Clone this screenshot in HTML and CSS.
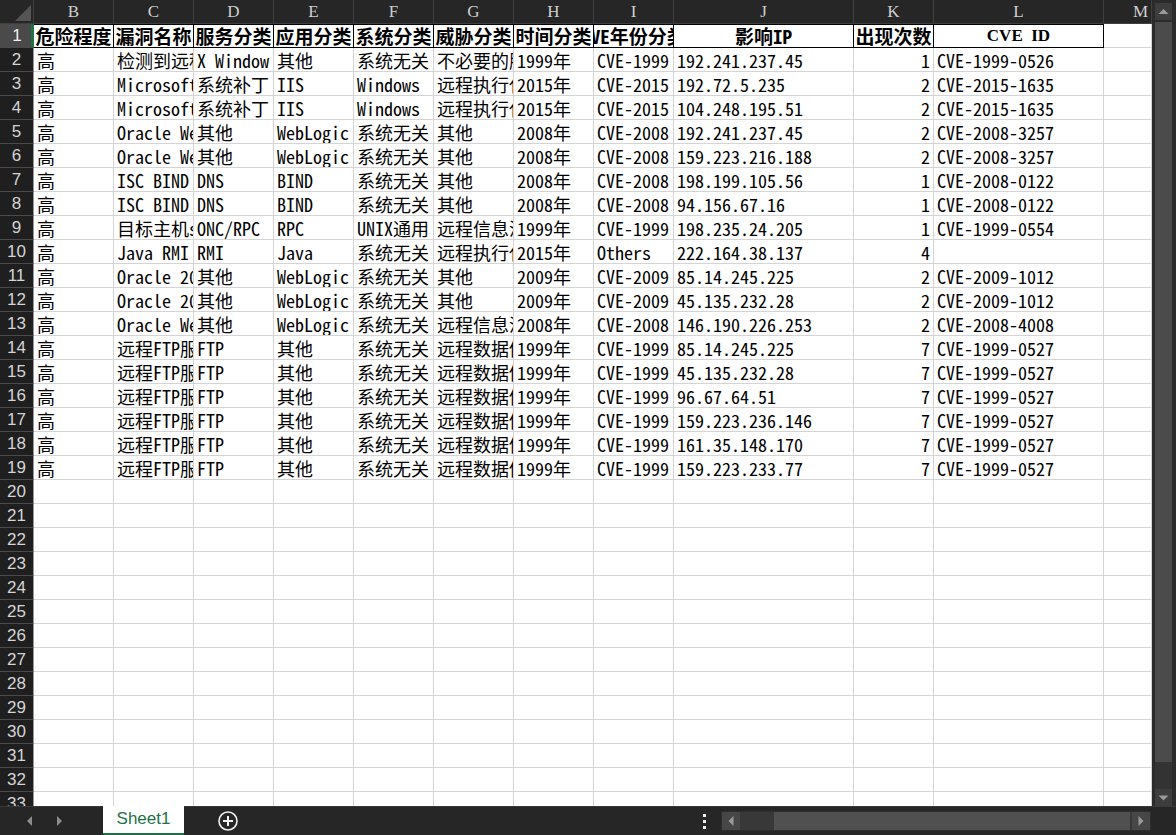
FILE: index.html
```html
<!DOCTYPE html>
<html lang="zh">
<head>
<meta charset="utf-8">
<title>Sheet1</title>
<link rel="stylesheet" href="styles.css">
</head>
<body>
<div class="app">
  <div class="main">
    <div class="sheet">
      <div class="row colhdr"><span class="corner"></span><span>B</span><span>C</span><span>D</span><span>E</span><span>F</span><span>G</span><span>H</span><span>I</span><span>J</span><span>K</span><span>L</span><span class="m">M</span></div>
      <div class="row hdr"><span class="rh sel">1</span><span>危险程度</span><span>漏洞名称</span><span>服务分类</span><span>应用分类</span><span>系统分类</span><span>威胁分类</span><span>时间分类</span><span>CVE年份分类</span><span>影响IP</span><span>出现次数</span><span class="cveid">CVE  ID</span><span class="plain"></span></div>
      <div class="row"><span class="rh">2</span><span>高</span><span>检测到远程</span><span>X Window</span><span>其他</span><span>系统无关</span><span>不必要的服</span><span>1999年</span><span>CVE-1999</span><span>192.241.237.45</span><span class="n">1</span><span>CVE-1999-0526</span><span></span></div>
      <div class="row"><span class="rh">3</span><span>高</span><span>Microsoft</span><span>系统补丁</span><span>IIS</span><span>Windows</span><span>远程执行代</span><span>2015年</span><span>CVE-2015</span><span>192.72.5.235</span><span class="n">2</span><span>CVE-2015-1635</span><span></span></div>
      <div class="row"><span class="rh">4</span><span>高</span><span>Microsoft</span><span>系统补丁</span><span>IIS</span><span>Windows</span><span>远程执行代</span><span>2015年</span><span>CVE-2015</span><span>104.248.195.51</span><span class="n">2</span><span>CVE-2015-1635</span><span></span></div>
      <div class="row"><span class="rh">5</span><span>高</span><span>Oracle Web</span><span>其他</span><span>WebLogic</span><span>系统无关</span><span>其他</span><span>2008年</span><span>CVE-2008</span><span>192.241.237.45</span><span class="n">2</span><span>CVE-2008-3257</span><span></span></div>
      <div class="row"><span class="rh">6</span><span>高</span><span>Oracle Web</span><span>其他</span><span>WebLogic</span><span>系统无关</span><span>其他</span><span>2008年</span><span>CVE-2008</span><span>159.223.216.188</span><span class="n">2</span><span>CVE-2008-3257</span><span></span></div>
      <div class="row"><span class="rh">7</span><span>高</span><span>ISC BIND</span><span>DNS</span><span>BIND</span><span>系统无关</span><span>其他</span><span>2008年</span><span>CVE-2008</span><span>198.199.105.56</span><span class="n">1</span><span>CVE-2008-0122</span><span></span></div>
      <div class="row"><span class="rh">8</span><span>高</span><span>ISC BIND</span><span>DNS</span><span>BIND</span><span>系统无关</span><span>其他</span><span>2008年</span><span>CVE-2008</span><span>94.156.67.16</span><span class="n">1</span><span>CVE-2008-0122</span><span></span></div>
      <div class="row"><span class="rh">9</span><span>高</span><span>目标主机s</span><span>ONC/RPC</span><span>RPC</span><span>UNIX通用</span><span>远程信息泄</span><span>1999年</span><span>CVE-1999</span><span>198.235.24.205</span><span class="n">1</span><span>CVE-1999-0554</span><span></span></div>
      <div class="row"><span class="rh">10</span><span>高</span><span>Java RMI</span><span>RMI</span><span>Java</span><span>系统无关</span><span>远程执行代</span><span>2015年</span><span>Others</span><span>222.164.38.137</span><span class="n">4</span><span></span><span></span></div>
      <div class="row"><span class="rh">11</span><span>高</span><span>Oracle 20</span><span>其他</span><span>WebLogic</span><span>系统无关</span><span>其他</span><span>2009年</span><span>CVE-2009</span><span>85.14.245.225</span><span class="n">2</span><span>CVE-2009-1012</span><span></span></div>
      <div class="row"><span class="rh">12</span><span>高</span><span>Oracle 20</span><span>其他</span><span>WebLogic</span><span>系统无关</span><span>其他</span><span>2009年</span><span>CVE-2009</span><span>45.135.232.28</span><span class="n">2</span><span>CVE-2009-1012</span><span></span></div>
      <div class="row"><span class="rh">13</span><span>高</span><span>Oracle Web</span><span>其他</span><span>WebLogic</span><span>系统无关</span><span>远程信息泄</span><span>2008年</span><span>CVE-2008</span><span>146.190.226.253</span><span class="n">2</span><span>CVE-2008-4008</span><span></span></div>
      <div class="row"><span class="rh">14</span><span>高</span><span>远程FTP服</span><span>FTP</span><span>其他</span><span>系统无关</span><span>远程数据修</span><span>1999年</span><span>CVE-1999</span><span>85.14.245.225</span><span class="n">7</span><span>CVE-1999-0527</span><span></span></div>
      <div class="row"><span class="rh">15</span><span>高</span><span>远程FTP服</span><span>FTP</span><span>其他</span><span>系统无关</span><span>远程数据修</span><span>1999年</span><span>CVE-1999</span><span>45.135.232.28</span><span class="n">7</span><span>CVE-1999-0527</span><span></span></div>
      <div class="row"><span class="rh">16</span><span>高</span><span>远程FTP服</span><span>FTP</span><span>其他</span><span>系统无关</span><span>远程数据修</span><span>1999年</span><span>CVE-1999</span><span>96.67.64.51</span><span class="n">7</span><span>CVE-1999-0527</span><span></span></div>
      <div class="row"><span class="rh">17</span><span>高</span><span>远程FTP服</span><span>FTP</span><span>其他</span><span>系统无关</span><span>远程数据修</span><span>1999年</span><span>CVE-1999</span><span>159.223.236.146</span><span class="n">7</span><span>CVE-1999-0527</span><span></span></div>
      <div class="row"><span class="rh">18</span><span>高</span><span>远程FTP服</span><span>FTP</span><span>其他</span><span>系统无关</span><span>远程数据修</span><span>1999年</span><span>CVE-1999</span><span>161.35.148.170</span><span class="n">7</span><span>CVE-1999-0527</span><span></span></div>
      <div class="row"><span class="rh">19</span><span>高</span><span>远程FTP服</span><span>FTP</span><span>其他</span><span>系统无关</span><span>远程数据修</span><span>1999年</span><span>CVE-1999</span><span>159.223.233.77</span><span class="n">7</span><span>CVE-1999-0527</span><span></span></div>
      <div class="row"><span class="rh">20</span><span></span><span></span><span></span><span></span><span></span><span></span><span></span><span></span><span></span><span></span><span></span><span></span></div>
      <div class="row"><span class="rh">21</span><span></span><span></span><span></span><span></span><span></span><span></span><span></span><span></span><span></span><span></span><span></span><span></span></div>
      <div class="row"><span class="rh">22</span><span></span><span></span><span></span><span></span><span></span><span></span><span></span><span></span><span></span><span></span><span></span><span></span></div>
      <div class="row"><span class="rh">23</span><span></span><span></span><span></span><span></span><span></span><span></span><span></span><span></span><span></span><span></span><span></span><span></span></div>
      <div class="row"><span class="rh">24</span><span></span><span></span><span></span><span></span><span></span><span></span><span></span><span></span><span></span><span></span><span></span><span></span></div>
      <div class="row"><span class="rh">25</span><span></span><span></span><span></span><span></span><span></span><span></span><span></span><span></span><span></span><span></span><span></span><span></span></div>
      <div class="row"><span class="rh">26</span><span></span><span></span><span></span><span></span><span></span><span></span><span></span><span></span><span></span><span></span><span></span><span></span></div>
      <div class="row"><span class="rh">27</span><span></span><span></span><span></span><span></span><span></span><span></span><span></span><span></span><span></span><span></span><span></span><span></span></div>
      <div class="row"><span class="rh">28</span><span></span><span></span><span></span><span></span><span></span><span></span><span></span><span></span><span></span><span></span><span></span><span></span></div>
      <div class="row"><span class="rh">29</span><span></span><span></span><span></span><span></span><span></span><span></span><span></span><span></span><span></span><span></span><span></span><span></span></div>
      <div class="row"><span class="rh">30</span><span></span><span></span><span></span><span></span><span></span><span></span><span></span><span></span><span></span><span></span><span></span><span></span></div>
      <div class="row"><span class="rh">31</span><span></span><span></span><span></span><span></span><span></span><span></span><span></span><span></span><span></span><span></span><span></span><span></span></div>
      <div class="row"><span class="rh">32</span><span></span><span></span><span></span><span></span><span></span><span></span><span></span><span></span><span></span><span></span><span></span><span></span></div>
      <div class="row"><span class="rh">33</span><span></span><span></span><span></span><span></span><span></span><span></span><span></span><span></span><span></span><span></span><span></span><span></span></div>
    </div>
    <div class="vscroll">
      <div class="vbtn"><svg width="17" height="17" viewBox="0 0 17 17"><path d="M3.5 11 L8.5 6 L13.5 11 Z" fill="#9a9a9a"/></svg></div>
      <div class="vthumb"></div>
      <div class="vtrack"></div>
      <div class="vbtn"><svg width="17" height="17" viewBox="0 0 17 17"><path d="M3.5 6.5 L8.5 11.5 L13.5 6.5 Z" fill="#9a9a9a"/></svg></div>
    </div>
  </div>
  <div class="bottom">
    <div class="nav">
      <svg class="navl" width="8" height="12" viewBox="0 0 8 12"><path d="M6 1 L1 6 L6 11 Z" fill="#8c8c8c"/></svg>
      <svg class="navr" width="8" height="12" viewBox="0 0 8 12"><path d="M2 1 L7 6 L2 11 Z" fill="#8c8c8c"/></svg>
    </div>
    <div class="tab">Sheet1</div>
    <svg class="add" width="20" height="20" viewBox="0 0 20 20"><circle cx="10" cy="10" r="9" fill="none" stroke="#f2f2f2" stroke-width="1.6"/><path d="M10 5 V15 M5 10 H15" stroke="#f2f2f2" stroke-width="2"/></svg>
    <div class="dots"><i></i><i></i><i></i></div>
    <div class="hscroll">
      <div class="hbtn"><svg width="18" height="18" viewBox="0 0 18 18"><path d="M11.5 4 L6.5 9 L11.5 14 Z" fill="#9a9a9a"/></svg></div>
      <div class="htrack"></div>
      <div class="hthumb"></div>
      <div class="hbtn"><svg width="18" height="18" viewBox="0 0 18 18"><path d="M6.5 4 L11.5 9 L6.5 14 Z" fill="#9a9a9a"/></svg></div>
    </div>
  </div>
</div>
</body>
</html>
```
FILE: styles.css
```css
* { box-sizing: border-box; }
html, body { margin: 0; padding: 0; }
body { background: #262626; width: 1176px; height: 835px; overflow: hidden; }

.app { width: 1176px; height: 835px; display: flex; flex-direction: column; }
.main { height: 806px; display: flex; }
.sheet { width: 1152px; height: 806px; overflow: hidden; background: #fff; }

.row {
  display: grid;
  grid-template-columns: 34px repeat(8, 80px) 180px 80px 170px 48px;
  height: 24px;
}
.row > span {
  display: flex;
  align-items: center;
  justify-content: flex-start;
  overflow: hidden;
  white-space: nowrap;
  padding: 1px 3px 0;
  border-right: 1px solid #d4d4d4;
  border-bottom: 1px solid #d4d4d4;
  font: 18px/22px "Noto Sans Mono CJK SC", "Liberation Mono", "Noto Sans CJK SC", monospace;
  color: #000;
  background: #fff;
}
.row > span.n { justify-content: flex-end; }

/* column header */
.colhdr > span {
  background: #262626;
  color: #cfcfcf;
  justify-content: center;
  border-right: 1px solid #3f3f3f;
  border-bottom: 1px solid #3f3f3f;
  font: 17px/22px "Liberation Serif", serif;
  padding: 0 3px;
}
.colhdr > span.m { justify-content: flex-end; }
.colhdr > span.corner { position: relative; background: #262626; }
.colhdr > span.corner::after {
  content: "";
  position: absolute;
  right: 2px;
  bottom: 2px;
  width: 0;
  height: 0;
  border-left: 16px solid transparent;
  border-bottom: 16px solid #555;
}

/* row header */
.row > span.rh {
  background: #1f1f1f;
  color: #d4d4d4;
  justify-content: center;
  border-right: 1px solid #9a9a9a;
  border-bottom: 1px solid #4a4a4a;
  font: 17px/22px "Liberation Sans", "Noto Sans", sans-serif;
  padding: 0;
}
.row > span.rh.sel {
  background: #4a4a4a;
  color: #f0f0f0;
  border-right: none;
  box-shadow: inset -3px 0 0 #1f7244;
}

/* header row 1 */
.hdr > span {
  justify-content: center;
  font-weight: bold;
  font-size: 19px;
  border-right: 1px solid #000;
  border-bottom: 1px solid #000;
  box-shadow: inset 0 1px 0 #000;
  padding: 0 1px;
}
.hdr > span.cveid {
  font: bold 17px/22px "Liberation Serif", serif;
  white-space: pre;
}
.hdr > span.plain {
  border-right: 1px solid #d4d4d4;
  border-bottom: 1px solid #d4d4d4;
  box-shadow: none;
}

/* vertical scrollbar */
.vscroll {
  width: 24px;
  height: 806px;
  background: #2b2b2b;
  display: flex;
  flex-direction: column;
  padding: 3px 4px 0 3px;
}
.vbtn { height: 17px; background: #3d3d3d; display: flex; }
.vthumb { height: 740px; margin-top: 2px; background: #4b4b4b; }
.vtrack { flex: 1; background: #333333; }

/* bottom bar */
.bottom {
  height: 29px;
  display: flex;
  align-items: stretch;
  background: #262626;
  border-top: 1px solid #3a3a3a;
}
.nav { width: 103px; display: flex; align-items: center; padding-left: 26px; gap: 21px; }
.tab {
  width: 81px;
  background: #fff;
  color: #1e7145;
  font: 17px/26px "Liberation Sans", "Noto Sans", sans-serif;
  text-align: center;
  border-bottom: 2px solid #1e7145;
  margin-top: -1px;
}
.add { margin-left: 34px; align-self: center; }
.dots {
  margin-left: auto;
  width: 5px;
  display: flex;
  flex-direction: column;
  justify-content: center;
  gap: 3px;
  margin-right: 14px;
  padding-left: 1px;
}
.dots i { display: block; width: 3px; height: 3px; background: #f0f0f0; }
.hscroll {
  width: 430px;
  height: 20px;
  align-self: center;
  display: flex;
  border: 1px solid #2e2e2e;
  background: #383838;
  margin-right: 25px;
}
.hbtn { width: 18px; background: #474747; display: flex; }
.htrack { width: 34px; background: #383838; }
.hthumb { flex: 1; background: #505050; margin-right: 2px; }
```
